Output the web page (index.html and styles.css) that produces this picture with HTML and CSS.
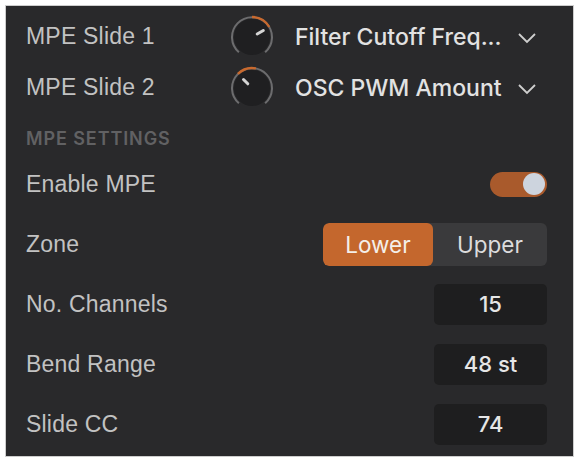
FILE: index.html
```html
<!DOCTYPE html>
<html>
<head>
<meta charset="utf-8">
<link rel="stylesheet" href="styles.css">
</head>
<body>
<div class="panel">
  <div class="row top">
    <span class="label">MPE Slide 1</span>
    <svg class="knob" viewBox="0 0 48 48" width="48" height="48">
      <circle cx="24" cy="24" r="18" fill="#1f1f21"/>
      <path d="M10.9 39.3 A20 20 0 1 1 37.1 39.3" fill="none" stroke="#6c6c6e" stroke-width="2"/>
      <path d="M24 4 A20 20 0 0 1 41.3 14" fill="none" stroke="#c8692e" stroke-width="2.4"/>
      <line x1="29.2" y1="21" x2="35.3" y2="17.5" stroke="#d4d4d4" stroke-width="3" stroke-linecap="round"/>
    </svg>
    <span class="select">Filter Cutoff Freq...</span>
    <svg class="chev" viewBox="0 0 20 12" width="20" height="12"><path d="M2 2 L10 10 L18 2" fill="none" stroke="#cfcfcf" stroke-width="1.8"/></svg>
  </div>
  <div class="row top">
    <span class="label">MPE Slide 2</span>
    <svg class="knob" viewBox="0 0 48 48" width="48" height="48">
      <circle cx="24" cy="24" r="18" fill="#1f1f21"/>
      <path d="M10.9 39.3 A20 20 0 1 1 37.1 39.3" fill="none" stroke="#6c6c6e" stroke-width="2"/>
      <path d="M9.9 9.9 A20 20 0 0 1 28 4.4" fill="none" stroke="#c8692e" stroke-width="2.4"/>
      <line x1="19.8" y1="19.8" x2="15.5" y2="15.5" stroke="#d4d4d4" stroke-width="3" stroke-linecap="round"/>
    </svg>
    <span class="select">OSC PWM Amount</span>
    <svg class="chev" viewBox="0 0 20 12" width="20" height="12"><path d="M2 2 L10 10 L18 2" fill="none" stroke="#cfcfcf" stroke-width="1.8"/></svg>
  </div>
  <div class="header">MPE SETTINGS</div>
  <div class="row setting">
    <span class="label">Enable MPE</span>
    <div class="toggle"><div class="thumb"></div></div>
  </div>
  <div class="row setting">
    <span class="label">Zone</span>
    <div class="segment">
      <span class="seg active">Lower</span>
      <span class="seg">Upper</span>
    </div>
  </div>
  <div class="row setting">
    <span class="label">No. Channels</span>
    <div class="value">15</div>
  </div>
  <div class="row setting">
    <span class="label">Bend Range</span>
    <div class="value">48 st</div>
  </div>
  <div class="row setting">
    <span class="label">Slide CC</span>
    <div class="value">74</div>
  </div>
</div>
</body>
</html>
```
FILE: styles.css
```css
html, body {
  margin: 0;
  padding: 0;
  background: #ffffff;
}
body {
  font-family: "Liberation Sans", Arial, sans-serif;
}
.panel {
  margin: 5px;
  width: 569px;
  height: 452px;
  border: 1px solid #cdcdcd;
  background: #29292b;
  padding: 5px 26px 0 20px;
  box-sizing: border-box;
}
.row {
  display: flex;
  align-items: center;
}
.top {
  height: 51px;
}
.label {
  font-size: 23px;
  color: #c2c2c2;
  flex: 1;
  letter-spacing: 0.2px;
}
.top .label {
  flex: 0 0 202px;
}
.knob {
  flex: 0 0 auto;
  margin-right: 19px;
}
.select {
  font-family: "Inter", "Liberation Sans", sans-serif;
  font-size: 23px;
  font-weight: 500;
  color: #e2e2e2;
  flex: 0 0 210px;
  white-space: nowrap;
}
.chev {
  margin-left: 12px;
  margin-top: 2px;
}
.header {
  height: 41px;
  display: flex;
  align-items: flex-end;
  padding-bottom: 5px;
  box-sizing: border-box;
  font-family: "Inter", "Liberation Sans", sans-serif;
  font-size: 18px;
  font-weight: 600;
  letter-spacing: 0.9px;
  color: #616163;
}
.setting {
  height: 60px;
}
.toggle {
  width: 57px;
  height: 25px;
  border-radius: 13px;
  background: #a95a2c;
  display: flex;
  align-items: center;
  justify-content: flex-end;
  padding-right: 2px;
  box-sizing: border-box;
}
.thumb {
  width: 22px;
  height: 22px;
  border-radius: 50%;
  background: #cdd4de;
}
.segment {
  display: flex;
  width: 224px;
  height: 43px;
  border-radius: 6px;
  background: #3a3a3c;
  overflow: hidden;
}
.seg {
  flex: 0 0 110px;
  display: flex;
  align-items: center;
  justify-content: center;
  font-family: "Inter", "Liberation Sans", sans-serif;
  font-size: 22.5px;
  font-weight: 400;
  color: #dcdcdc;
}
.seg + .seg {
  flex: 1;
}
.seg.active {
  background: #c4672d;
  color: #f4efe9;
  border-radius: 6px;
}
.value {
  width: 113px;
  height: 41px;
  border-radius: 5px;
  background: #1e1e1f;
  display: flex;
  align-items: center;
  justify-content: center;
  font-family: "Inter", "Liberation Sans", sans-serif;
  font-size: 22px;
  font-weight: 500;
  color: #e6e6e6;
}
```
